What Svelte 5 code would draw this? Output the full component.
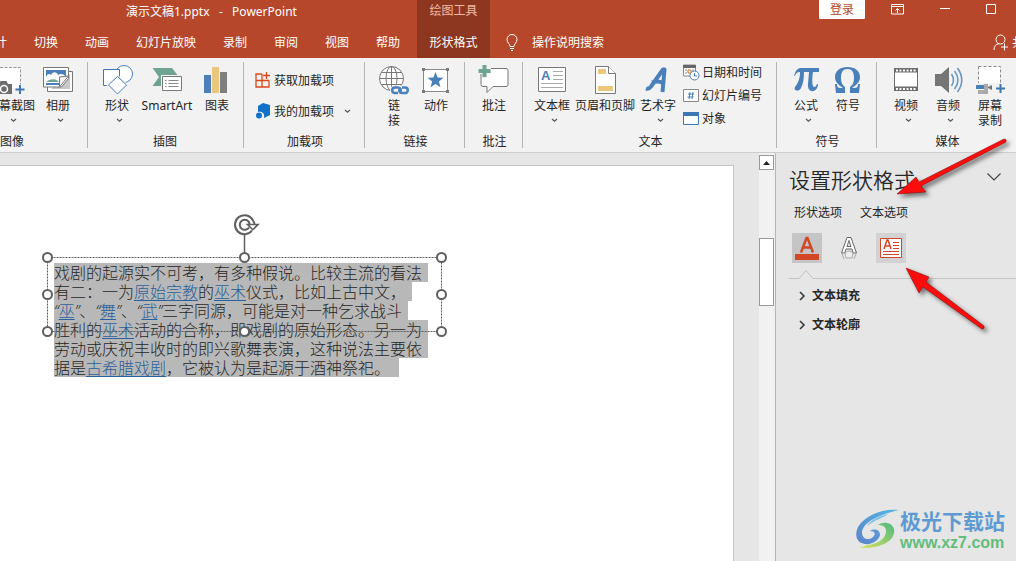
<script lang="ts">
  const tabs = ["设计", "切换", "动画", "幻灯片放映", "录制", "审阅", "视图", "帮助"];
  const sections = ["文本填充", "文本轮廓"];

  // one entry per line of the text box, "a" marks a link and "q" a quote mark
  type Part = { t: string; k?: "a" | "q" };
  const lines: Part[][] = [
    [{ t: "戏剧的起源实不可考，有多种假说。比较主流的看法" }],
    [{ t: "有二：一为" }, { t: "原始宗教", k: "a" }, { t: "的" }, { t: "巫术", k: "a" }, { t: "仪式，比如上古中文，" }],
    [
      { t: "“", k: "q" }, { t: "巫", k: "a" }, { t: "”", k: "q" }, { t: "、" },
      { t: "“", k: "q" }, { t: "舞", k: "a" }, { t: "”", k: "q" }, { t: "、" },
      { t: "“", k: "q" }, { t: "武", k: "a" }, { t: "”", k: "q" },
      { t: "三字同源，可能是对一种乞求战斗" },
    ],
    [{ t: "胜利的" }, { t: "巫术", k: "a" }, { t: "活动的合称，即戏剧的原始形态。另一为" }],
    [{ t: "劳动或庆祝丰收时的即兴歌舞表演，这种说法主要依" }],
    [{ t: "据是" }, { t: "古希腊戏剧", k: "a" }, { t: "，它被认为是起源于酒神祭祀。" }],
  ];
</script>

{#snippet chevron()}
  <svg class="chev" width="7" height="5" viewBox="0 0 7 5"><path d="M1 1l2.500 2.300L6 1" fill="none" stroke="#555" stroke-width="1.200" /></svg>
{/snippet}

{#snippet big(label, icon, size = "", drop = false)}
  <button class="big {size}" type="button">
    <svg width="30" height="30" viewBox="0 0 30 30">{@render icon()}</svg>
    <span>{label}</span>
    {#if drop}{@render chevron()}{/if}
  </button>
{/snippet}

{#snippet screenshotIcon()}
  <path d="M4 3h20v20H4z" fill="#fff" />
  <path d="M4 2.500h20.500v17" fill="none" stroke="#999" stroke-dasharray="3 1.500" />
  <path d="M0 19h3l1.500-3h6l1.500 3h4v10H0z" fill="#6d6d6d" />
  <circle cx="8" cy="24" r="3.500" fill="#6d6d6d" stroke="#fff" stroke-width="1.500" />
  <path d="M24 20v9M19.500 24.500h9" stroke="#3f76b5" stroke-width="2" />
{/snippet}
{#snippet albumIcon()}
  <path d="M4.500 8v18.500h25v-20H24" fill="#fff" stroke="#777" />
  <path d="M8 24h19V9z" fill="#c8c8c8" />
  <path d="M.5 2.500h25v11l-7 8.500H.5z" fill="#fff" stroke="#777" />
  <path d="M3 5h20v8H3z" fill="#4a80ba" />
  <path d="M3 12c2-4 4-3 5-2 2-4 6-3 7 0 3-2 6-1 8 2v3H3z" fill="#fff" />
  <path d="M3 17c4-3 9-4 13 0H3z" fill="#6fa590" />
  <path d="M3 19h14" stroke="#4a80ba" stroke-width="2" />
  <path d="M25.500 11l-9 1v10z" fill="#f5f5f5" stroke="#777" />
{/snippet}
{#snippet shapesIcon()}
  <circle cx="22" cy="9" r="8.500" fill="#fff" stroke="#4a80ba" />
  <path d="M1.500 4.500h16v16h-16z" fill="#fff" stroke="#3d76b5" />
  <path d="M15.500 11.500l9 8.500-9 9-9-9z" fill="#fff" stroke="#f2f2f2" stroke-width="3" />
  <path d="M15.500 11.500l9 8.500-9 9-9-9z" fill="#fff" stroke="#4a80ba" />
{/snippet}
{#snippet smartIcon()}
  <path d="M.5 3H20l7 9-7 9H.5L7 12z" fill="#6fa590" />
  <path d="M9 10h22v17H9z" fill="#f2f2f2" />
  <path d="M10.500 11.500h19v14h-19z" fill="#fff" stroke="#777" />
  <path d="M13 15.500h1.500m2 0h10M13 18.500h1.500m2 0h10M13 21.500h1.500m2 0h10" stroke="#888" />
{/snippet}
{#snippet chartIcon()}
  <path d="M2 10h7v18H2z" fill="#4a80ba" />
  <path d="M10 2h7v26h-7z" fill="#ebc67d" />
  <path d="M18 7h7v21h-7z" fill="#7f7f7f" />
{/snippet}
{#snippet linkIcon()}
  <g fill="none" stroke="#777">
    <circle cx="12.500" cy="13.500" r="12" fill="#fff" />
    <ellipse cx="12.500" cy="13.500" rx="5.500" ry="12" />
    <path d="M12.500 1.500v24M.5 13.500h24M2.500 7.500h20M2.500 19.500h20" />
  </g>
  <rect x="11" y="20.500" width="20" height="9" rx="4.500" fill="#f2f2f2" />
  <g fill="none" stroke="#4a80ba" stroke-width="2.500"><path d="M19 28h-3a2.800 2.800 0 010-5.600h3c3 0 3.500 3 2 4.600" /><path d="M23 22.500h3a2.800 2.800 0 010 5.600h-3c-3 0-3.500-3-2-4.600" /></g>
{/snippet}
{#snippet actionIcon()}
  <path d="M2.500 4.500h24v22h-24z" fill="#fff" stroke="#888" />
  <path d="M1 3h3v3H1zM25 3h3v3h-3zM1 25h3v3H1zM25 25h3v3h-3z" fill="#7a7a7a" />
  <path d="M14.500 7l2.100 5.600 5.900.2-4.600 3.700 1.600 5.700-5-3.300-5 3.300 1.600-5.700-4.600-3.700 5.900-.2z" fill="#4a80ba" />
{/snippet}
{#snippet commentIcon()}
  <path d="M4 3.500h23q2 0 2 2v14q0 2-2 2H14l-6 6v-6H4q-2 0-2-2v-14q0-2 2-2z" fill="#fff" stroke="#777" />
  <path d="M3-1h5v4h4v6H8v4H3V9h-4V3h4z" fill="#f2f2f2" />
  <path d="M3.500 0h4v4h4v4h-4v4h-4V8h-4V4h4z" fill="#6fa590" />
{/snippet}
{#snippet textboxIcon()}
  <path d="M1.500 2.500h27v24h-27z" fill="#fff" stroke="#777" />
  <text x="4" y="15" font-family="Liberation Sans" font-weight="700" font-size="13" fill="#4a80ba">A</text>
  <path d="M16 6.500h10M16 10.500h10M16 14.500h10M4 18.500h22M4 22.500h22" stroke="#aaa" />
{/snippet}
{#snippet footerIcon()}
  <path d="M5.500 1.500h13l7 7v20h-20z" fill="#fff" stroke="#777" />
  <path d="M18.500 1.500v7h7" fill="#fff" stroke="#777" />
  <path d="M8 4h8v5H8zM8 21h15v5H8z" fill="#ebc67d" />
{/snippet}
{#snippet wordartIcon()}
  <path d="M3 23.500q3 1 5-2L20 4.500h1.500L19.500 27M9 17.500q6-2 11 .5" fill="none" stroke="#4a80ba" stroke-width="4" stroke-linejoin="round" />
{/snippet}
{#snippet piIcon()}
  <path d="M3 11C5 4 7 3 11 3h17v4h-6c-1 6-1 12 0 14s3 1 4-2h1c0 9-11 10-10 0l1-12h-5c0 7-1 12-3 16s-8 3-6-1c3-4 5-8 5-15-3 0-4 1-5 4z" fill="#4a80ba" />
{/snippet}
{#snippet omegaIcon()}
  <path d="M2 19h2c0 3 1 4 4 4h2C4 19 2 16 2 12 2 6 7 2 14.500 2S27 6 27 12c0 4-2 7-8 11h2c3 0 4-1 4-4h2l-1 9h-9v-6c3-2 4-5 4-9 0-6-2-9-6.500-9S8 7 8 13c0 4 1 7 4 9v6H3z" fill="#4a80ba" />
{/snippet}
{#snippet videoIcon()}
  <path d="M3 3h24v23H3z" fill="#6d6d6d" />
  <path d="M4 7.500h22v14H4z" fill="#fff" />
  <path d="M5 5.500h21M5 24h21" stroke="#fff" stroke-width="2" stroke-dasharray="2 1.500" />
{/snippet}
{#snippet audioIcon()}
  <path d="M2 9h6l8-7v26l-8-7H2z" fill="#757575" />
  <path d="M18.500 9q4 6 0 12M21.500 6q7 9 0 18M24.500 3q8.500 12 0 24" fill="none" stroke="#6c98c8" stroke-width="1.600" />
{/snippet}
{#snippet recordIcon()}
  <path d="M3.500 1.500h22v22h-22z" fill="#fff" stroke="#888" stroke-dasharray="3 2" />
  <path d="M0 18h26v11H0z" fill="#f2f2f2" />
  <path d="M1 20h8v4H1z" fill="#4a80ba" />
  <path d="M9 19h4v10H3v-4h6z" fill="#aaa" /><path d="M13 22l4-2v5l-4-2z" fill="#777" />
  <path d="M25.500 19v9M21 23.500h9" stroke="#3f76b5" stroke-width="2" />
{/snippet}

<div class="app">
  <header>
    <div class="head-main">
      <div class="title">演示文稿1.pptx&nbsp;&nbsp; -&nbsp;&nbsp; PowerPoint</div>
      <nav class="tabs">
        {#each tabs as tab}
          <button type="button">{tab}</button>
        {/each}
      </nav>
    </div>
    <div class="head-context">
      <span>绘图工具</span>
      <button type="button">形状格式</button>
    </div>
    <div class="head-rest">
      <div class="window-row">
        <button class="login" type="button">登录</button>
        <button type="button" aria-label="功能区显示选项">
          <svg width="13" height="11" viewBox="0 0 13 11" fill="none" stroke="#fff"><path d="M.5.5h12v9.500H.5zM.5 2.500h12M6.500 9V4.500M4.500 6.500l2-2 2 2" /></svg>
        </button>
        <button type="button" aria-label="最小化">
          <svg width="10" height="11" viewBox="0 0 10 11"><path d="M0 4.500h10" stroke="#fff" /></svg>
        </button>
        <button type="button" aria-label="最大化">
          <svg width="10" height="11" viewBox="0 0 10 11"><path d="M.5.5h9v9h-9z" fill="none" stroke="#fff" /></svg>
        </button>
      </div>
      <div class="search-row">
        <button class="tell" type="button">
          <svg width="12" height="17" viewBox="0 0 12 17" fill="none" stroke="#fff"><path d="M4 12.500C4 9.500 1 9 1 5.500a5 5 0 0110 0C11 9 8 9.500 8 12.500zM4 14.500h4M5 16.500h2" /></svg>
          操作说明搜索
        </button>
        <button class="share" type="button">
          <svg width="16" height="17" viewBox="0 0 16 17" fill="none" stroke="#fff"><circle cx="7.500" cy="5.500" r="4.500" /><path d="M1 16c0-4 2-6 5-6.300M11.500 9.500v7M8 13h7" /></svg>
          共享
        </button>
      </div>
    </div>
  </header>

  <div class="ribbon">
    <section class="images">
      <div class="tools">
        {@render big("屏幕截图", screenshotIcon, "w52", true)}
        {@render big("相册", albumIcon, "", true)}
      </div>
      <h2>图像</h2>
    </section>
    <section class="illus">
      <div class="tools">
        {@render big("形状", shapesIcon, "w48", true)}
        {@render big("SmartArt", smartIcon, "w52")}
        {@render big("图表", chartIcon, "w48")}
      </div>
      <h2>插图</h2>
    </section>
    <section class="addins">
      <div class="tools stack">
        <button class="small" type="button">
          <svg width="18" height="18" viewBox="0 0 18 18" fill="none" stroke="#d9481c" stroke-width="1.300"><path d="M8 3H2v13h13V9.500M2 9.500h13M8 3v13M12.500 1v7M9 4.500h7" /></svg>
          获取加载项
        </button>
        <button class="small" type="button">
          <svg width="18" height="18" viewBox="0 0 18 18" fill="#0f72c8"><path d="M4 4l5-3 7 2v10l-6 3c1-5-2-7-6-6z" /><circle cx="5" cy="13.500" r="3" /></svg>
          我的加载项
          <span class="gap">{@render chevron()}</span>
        </button>
      </div>
      <h2>加载项</h2>
    </section>
    <section class="links">
      <div class="tools">
        {@render big("链接", linkIcon, "narrow")}
        {@render big("动作", actionIcon)}
      </div>
      <h2>链接</h2>
    </section>
    <section class="comments">
      <div class="tools">{@render big("批注", commentIcon)}</div>
      <h2>批注</h2>
    </section>
    <section class="text">
      <div class="tools">
        {@render big("文本框", textboxIcon, "", true)}
        {@render big("页眉和页脚", footerIcon, "w64")}
        {@render big("艺术字", wordartIcon, "", true)}
        <div class="list">
          <button class="small" type="button">
            <svg width="17" height="17" viewBox="0 0 17 17"><path d="M.5 1h12v11H.5z" fill="#fff" stroke="#888" /><path d="M0 1h13v3H0z" fill="#666" /><path d="M2 6h2M2 9h2M9 6h2" stroke="#888" /><path d="M5 6h3v3H5z" fill="#fff" stroke="#d9701c" /><circle cx="11.500" cy="11.500" r="4.500" fill="#fff" stroke="#4a80ba" /><path d="M11.500 9v3h2.500" fill="none" stroke="#4a80ba" /></svg>
            日期和时间
          </button>
          <button class="small" type="button">
            <svg width="17" height="17" viewBox="0 0 17 17"><path d="M.5 2.500h15v12H.5z" fill="#fff" stroke="#888" /><path d="M7 5l-1 7M10 5l-1 7M5 7h6M4.500 10h6" stroke="#4a80ba" /></svg>
            幻灯片编号
          </button>
          <button class="small" type="button">
            <svg width="17" height="17" viewBox="0 0 17 17"><path d="M.5 2.500h15v12H.5z" fill="#fff" stroke="#3d76b5" /><path d="M0 2h16v4H0z" fill="#3d76b5" /></svg>
            对象
          </button>
        </div>
      </div>
      <h2>文本</h2>
    </section>
    <section class="symbols">
      <div class="tools">
        {@render big("公式", piIcon, "", true)}
        {@render big("符号", omegaIcon)}
      </div>
      <h2>符号</h2>
    </section>
    <section class="media">
      <div class="tools">
        {@render big("视频", videoIcon, "", true)}
        {@render big("音频", audioIcon, "", true)}
        {@render big("屏幕录制", recordIcon, "wrap")}
      </div>
      <h2>媒体</h2>
    </section>
  </div>

  <main>
    <div class="slide">
      <div class="shape">
        <div class="copy">
          {#each lines as line}
            <div class="line">{#each line as part}{#if part.k === "a"}<a href="#link">{part.t}</a>{:else if part.k === "q"}<i>{part.t}</i>{:else}{part.t}{/if}{/each}</div>
          {/each}
        </div>
        <svg class="frame" viewBox="0 0 408 124" width="408" height="124" fill="none" stroke="#5f5f5f">
          <path d="M7.500 40.500h394v74H7.500z" stroke-dasharray="2 1" />
          <path d="M204.500 18v18" stroke-width="1.500" />
          <g fill="#fff" stroke-width="2">
            {#each [[7.5, 40.5], [204.5, 40.5], [401.5, 40.5], [7.5, 77.5], [401.5, 77.5], [7.5, 114.5], [204.5, 114.5], [401.5, 114.5]] as [cx, cy]}
              <circle {cx} {cy} r="4.500" />
            {/each}
          </g>
          <g stroke-width="2">
            <path d="M212 13.500a9.500 9.500 0 111-10q1.500 2 1.500 4" />
            <path d="M209 10.500a5 5 0 11-.5-6q1 1 1 3" />
          </g>
          <path d="M207.500 7.500h10.500l-5.200 5.200z" fill="#fff" stroke-width="1.600" />
        </svg>
      </div>
    </div>

    <div class="scrollbar">
      <button type="button" aria-label="向上滚动"><svg width="7" height="4" viewBox="0 0 7 4"><path d="M3.500 0L7 4H0z" fill="#222" /></svg></button>
      <div class="thumb"></div>
    </div>

    <aside>
      <div class="pane-head">
        <h1>设置形状格式</h1>
        <button type="button" aria-label="任务窗格选项"><svg width="14" height="8" viewBox="0 0 14 8"><path d="M.5.5L7 7 13.500.5" fill="none" stroke="#444" stroke-width="1.200" /></svg></button>
      </div>
      <div class="pane-tabs">
        <button type="button">形状选项</button>
        <button type="button">文本选项</button>
      </div>
      <div class="pane-icons">
        <button class="on" type="button" aria-label="文本填充与轮廓">
          <svg width="30" height="30" viewBox="0 0 30 30"><path d="M9 19.500L14.500 5h1L21 19.500M11 14.500h8" fill="none" stroke="#d24726" stroke-width="2.500" /><path d="M3 21h24v6H3z" fill="#d24726" /></svg>
        </button>
        <button type="button" aria-label="文字效果">
          <svg width="30" height="30" viewBox="0 0 30 30"><path d="M7.500 20L13 4.500h4L22.500 20h-3.300L18 16h-6l-1.200 4zM13 13.500h4L15 7.500z" fill="#fff" stroke="#666" /><path d="M8 21l2 5M22 21l-2 5M11 20q4-4 8 0l-1 5h-6z" fill="#eee" stroke="#aaa" /></svg>
        </button>
        <button class="hover" type="button" aria-label="文本框">
          <svg width="30" height="30" viewBox="0 0 30 30"><path d="M4.500 5.500h21v19h-21z" fill="#fff" stroke="#d24726" /><path d="M8 16l3-9h1l3 9M9 13h5" fill="none" stroke="#d24726" stroke-width="1.500" /><path d="M17 9.500h6M17 12.500h6M17 15.500h6M7 18.500h16M7 21.500h16" stroke="#d24726" /></svg>
        </button>
      </div>
      <div class="notch">
        <svg width="24" height="10" viewBox="0 0 24 10"><path d="M0 9.500h5l7-8 7 8h5" fill="none" stroke="#c3c3c3" /></svg>
      </div>
      {#each sections as name}
        <button class="section" type="button">
          <svg width="6" height="10" viewBox="0 0 6 10"><path d="M1 1l4 4-4 4" fill="none" stroke="#333" stroke-width="1.500" /></svg>
          {name}
        </button>
      {/each}

      <div class="brand">
        <svg width="44" height="42" viewBox="0 0 44 42">
          <defs>
            <linearGradient id="b1" x1="0" y1="1" x2="1" y2="0"><stop offset="0" stop-color="#5b83c9" /><stop offset="1" stop-color="#56b7e4" /></linearGradient>
            <linearGradient id="b2" x1="0" y1="1" x2="1" y2="0"><stop offset="0" stop-color="#dbe35c" /><stop offset="1" stop-color="#4db880" /></linearGradient>
          </defs>
          <path d="M43 1C27-1 9 6 2 18c-4 9-1 16 7 17 7 1 14-4 15-9 0-5-5-7-10-4 5 0 6 3 3 6-4 4-11 2-11-4C6 13 25 5 43 1z" fill="url(#b1)" />
          <path d="M22 16c5-4 14-3 16 4 2 10-10 20-35 19 5-1 7-3 9-3 9-1 18-6 18-14 0-4-3-6-8-6z" fill="url(#b2)" />
          <path d="M11 17c4-6 12-10 21-12-5 4-13 6-21 12z" fill="#77c4e8" />
        </svg>
        <div>
          <strong>极光下载站</strong>
          <a href="#site">www.xz7.com</a>
        </div>
      </div>

      <svg class="arrows" width="140" height="200" viewBox="0 0 140 200">
        <g fill="#fb0d0d" stroke="#8c1010" stroke-width=".6">
          <path d="M20 54l19-17 3 5L127-1q3 0 2 3L44 46l5 6z" />
          <path d="M29 128l23 9-3 5 58 44q1 3-2 3L46 147l-4 6z" />
        </g>
      </svg>
    </aside>
  </main>
</div>

<style>
  :global(body) {
    background: #e6e6e6;
  }
  .app {
    min-height: 100vh;
    display: flex;
    flex-direction: column;
    overflow: hidden;
    font: 12px/15px "Noto Sans", "Noto Sans CJK SC", sans-serif;
    color: #262626;
  }
  button {
    margin: 0;
    padding: 0;
    border: 0;
    background: none;
    color: inherit;
    font: inherit;
    white-space: nowrap;
  }
  svg {
    display: block;
    flex: none;
    overflow: visible;
  }

  header {
    display: flex;
    height: 58px;
    background: #b7472a;
    color: #fff;
  }
  .head-main {
    flex: none;
    width: 417px;
  }
  .title {
    padding: 4px 0 0 126px;
    height: 22px;
  }
  .tabs {
    display: flex;
    gap: 27px;
    margin-left: -17px;
    padding-top: 9px;
  }
  .head-context {
    flex: none;
    width: 73px;
    background: #8e3720;
    text-align: center;
    display: flex;
    flex-direction: column;
    gap: 17px;
    padding-top: 3px;
    box-sizing: border-box;
  }
  .head-context span {
    color: #f3b8a2;
  }
  .head-rest {
    flex: 1;
    min-width: 0;
  }
  .window-row {
    display: flex;
    justify-content: flex-end;
    gap: 36px;
    height: 34px;
    padding-right: 20px;
    align-items: flex-start;
  }
  .window-row button {
    padding-top: 4px;
  }
  .window-row .login {
    width: 46px;
    height: 19px;
    padding: 0;
    margin-right: -10px;
    background: #fff;
    color: #b7472a;
    border-radius: 0 0 1px 1px;
  }
  .search-row {
    display: flex;
    justify-content: space-between;
    padding-left: 16px;
    margin-right: -20px;
  }
  .tell,
  .share {
    display: flex;
    align-items: center;
    gap: 14px;
  }
  .share {
    gap: 3px;
  }

  .ribbon {
    display: flex;
    height: 94px;
    background: #f2f2f2;
    border-bottom: 1px solid #cdcdcd;
  }
  section {
    flex: none;
    box-sizing: border-box;
    margin: 4px 0;
    padding-left: 8px;
    border-right: 1px solid #b4b4b4;
    display: flex;
    flex-direction: column;
    justify-content: space-between;
  }
  section h2 {
    margin: 0 6px -1px 0;
    font: inherit;
    text-align: center;
  }
  .tools {
    display: flex;
    padding-top: 3px;
  }
  .big {
    width: 42px;
    display: flex;
    flex-direction: column;
    align-items: center;
  }
  .big span {
    padding-top: 3px;
  }
  .big .chev {
    margin: 5px 0 0 4px;
  }
  .w48 { width: 48px; }
  .w52 { width: 52px; }
  .w64 { width: 64px; }
  .narrow span {
    width: 12px;
    white-space: normal;
  }
  .wrap span {
    width: 24px;
    white-space: normal;
  }
  .images {
    width: 88px;
    padding: 0;
  }
  .images .tools {
    margin-left: -15px;
  }
  .images h2 {
    text-align: left;
  }
  .illus { width: 156px; padding-left: 5px; }
  .addins { width: 121px; }
  .links { width: 100px; }
  .comments { width: 58px; }
  .text { width: 254px; }
  .symbols { width: 100px; }
  .media {
    flex: 1;
    border-right: 0;
  }
  .small {
    display: flex;
    align-items: center;
    gap: 2px;
  }
  .stack {
    flex-direction: column;
    gap: 13px;
    padding: 9px 0 0 2px;
  }
  .gap {
    padding-left: 8px;
  }
  .list {
    padding-left: 4px;
    margin-top: -1px;
    display: grid;
    gap: 6px;
    align-content: start;
  }
  .list .small {
    height: 17px;
  }

  main {
    flex: 1;
    display: flex;
  }
  .slide {
    flex: 1;
    min-width: 0;
    margin: 12px 25px 0 0;
    border: 1px solid #c4c4c4;
    border-width: 1px 1px 0 0;
    background: #fff;
    padding: 97px 0 0 54px;
  }
  .shape {
    position: relative;
    width: 380px;
  }
  .frame {
    position: absolute;
    top: -46px;
    left: -14px;
  }
  .copy {
    font: 300 16px/19px "Noto Sans CJK SC", sans-serif;
    color: #262626;
  }
  .line {
    width: fit-content;
    height: 19px;
    padding-right: 6px;
    background: #b8b8b8;
    white-space: nowrap;
  }
  .line:last-child {
    padding-right: 9px;
  }
  .copy a {
    color: #2a609c;
    text-decoration: underline;
    text-underline-offset: 2px;
  }
  .copy i {
    font-family: "Open Sans", sans-serif;
  }

  .scrollbar {
    width: 15px;
    padding: 2px 1px 0 0;
    background: #f1f1f1;
    border-right: 1px solid #b5b5b5;
    margin-right: 1px;
    flex: none;
    box-sizing: content-box;
  }
  .scrollbar button,
  .thumb {
    box-sizing: border-box;
    width: 15px;
    height: 15px;
    border: 1px solid #999;
    background: #fff;
    display: flex;
    align-items: center;
    justify-content: center;
  }
  .thumb {
    height: 68px;
    margin-top: 68px;
  }

  aside {
    position: relative;
    flex: none;
    width: 227px;
    padding: 12px 0 8px 12px;
    display: flex;
    flex-direction: column;
    align-items: flex-start;
  }
  .pane-head {
    align-self: stretch;
    display: flex;
    justify-content: space-between;
    padding-right: 15px;
  }
  h1 {
    margin: 0;
    font-size: 21px;
    font-weight: 350;
    line-height: 30px;
  }
  .pane-head button {
    height: 24px;
  }
  .pane-tabs {
    display: flex;
    gap: 18px;
    padding: 10px 0 13px 5px;
  }
  .pane-icons {
    display: flex;
    gap: 12px;
    padding: 0 0 6px 3px;
  }
  .on { background: #c5c5c5; }
  .hover { background: #d2d2d2; }
  .notch {
    align-self: stretch;
    display: flex;
    align-items: flex-end;
    margin-bottom: 2px;
  }
  /* the rule runs on both sides of the little peak */
  .notch::before,
  .notch::after {
    content: "";
    width: 5px;
    height: 1px;
    background: #c3c3c3;
  }
  .notch::after {
    flex: 1;
  }
  .section {
    display: flex;
    align-items: center;
    gap: 7px;
    height: 29px;
    padding-left: 10px;
    font-weight: 700;
  }
  .brand {
    margin-top: auto;
    align-self: flex-end;
    display: flex;
    padding-right: 11px;
  }
  .brand strong,
  .brand a {
    display: block;
    font-size: 21px;
    line-height: 24px;
    color: #5f9bd3;
  }
  .brand a {
    font: 700 16px/20px "Liberation Sans", sans-serif;
    color: #62bd7d;
    text-decoration: none;
  }
  .arrows {
    position: absolute;
    top: -13px;
    left: 100px;
    pointer-events: none;
    filter: drop-shadow(3px 3px 2px rgba(0, 0, 0, 0.5));
  }
</style>
